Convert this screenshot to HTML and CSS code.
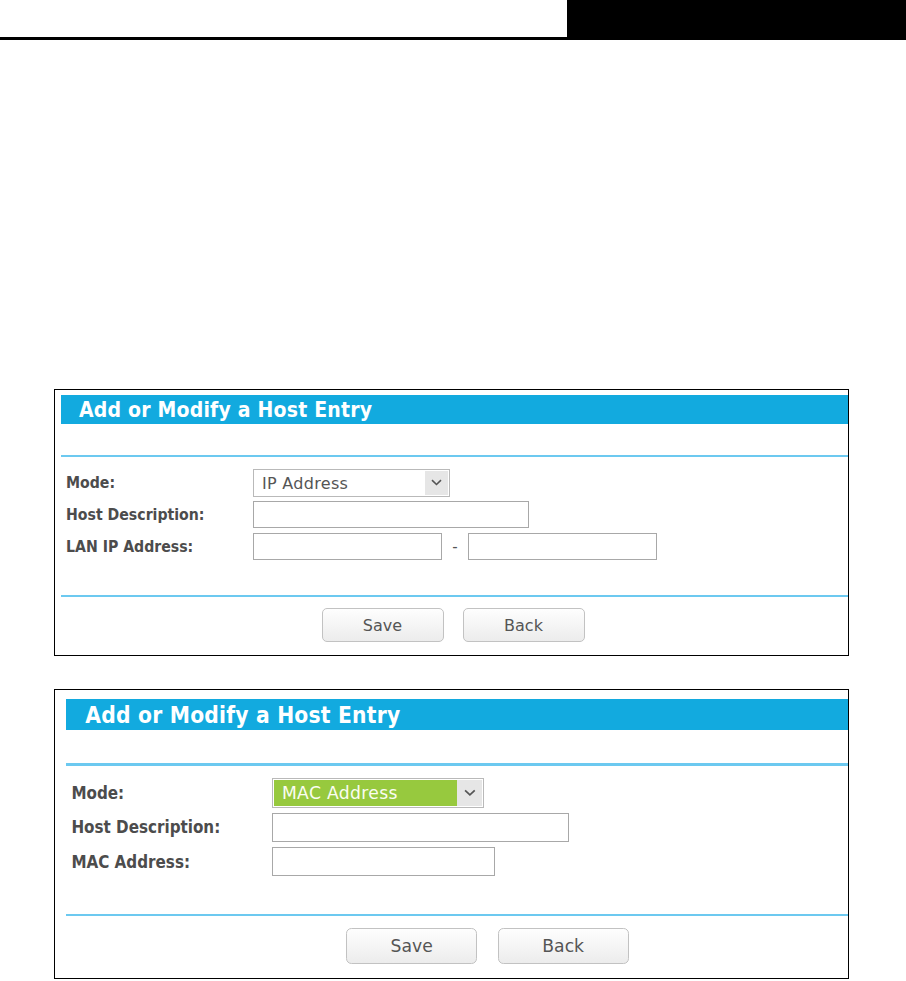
FILE: index.html
```html
<!DOCTYPE html>
<html lang="en">
<head>
    <meta charset="UTF-8">
    <meta name="viewport" content="width=device-width, initial-scale=1.0">
    <title>Add or Modify a Host Entry</title>
    <link rel="stylesheet" href="styles.css">
</head>
<body>
    <div class="doc-head">
        <div class="doc-tab"></div>
    </div>

    <div class="figures">
        <!-- figure 1: IP address mode -->
        <div class="figure">
            <div class="screen">
                <div class="title-bar">Add or Modify a Host Entry</div>
                <div class="divider divider-top"></div>
                <div class="form">
                    <div class="row">
                        <label class="label">Mode:</label>
                        <div class="select">
                            <span class="select-value">IP Address</span>
                            <span class="select-arrow">
                                <svg width="11" height="7" viewBox="0 0 11 7"><path d="M1 1.2 5.5 5.5 10 1.2" fill="none" stroke="#555" stroke-width="1.6"/></svg>
                            </span>
                        </div>
                    </div>
                    <div class="row">
                        <label class="label">Host Description:</label>
                        <input type="text" class="field field-desc">
                    </div>
                    <div class="row">
                        <label class="label">LAN IP Address:</label>
                        <input type="text" class="field field-ip">
                        <span class="dash">-</span>
                        <input type="text" class="field field-ip">
                    </div>
                </div>
                <div class="divider"></div>
                <div class="buttons">
                    <button class="btn">Save</button>
                    <button class="btn">Back</button>
                </div>
            </div>
        </div>

        <!-- figure 2: MAC address mode (screenshot taken a little larger) -->
        <div class="figure figure-zoomed">
            <div class="screen">
                <div class="title-bar">Add or Modify a Host Entry</div>
                <div class="divider divider-top"></div>
                <div class="form">
                    <div class="row">
                        <label class="label">Mode:</label>
                        <div class="select">
                            <span class="select-value selected">MAC Address</span>
                            <span class="select-arrow">
                                <svg width="11" height="7" viewBox="0 0 11 7"><path d="M1 1.2 5.5 5.5 10 1.2" fill="none" stroke="#555" stroke-width="1.6"/></svg>
                            </span>
                        </div>
                    </div>
                    <div class="row">
                        <label class="label">Host Description:</label>
                        <input type="text" class="field field-desc">
                    </div>
                    <div class="row">
                        <label class="label">MAC Address:</label>
                        <input type="text" class="field field-mac">
                    </div>
                </div>
                <div class="divider"></div>
                <div class="buttons">
                    <button class="btn">Save</button>
                    <button class="btn">Back</button>
                </div>
            </div>
        </div>
    </div>
</body>
</html>
```

FILE: styles.css
```css
body {
    margin: 0;
    background: #fff;
    font-family: 'DejaVu Sans', sans-serif;
    color: #4c4c4c;
}
.doc-head {
    height: 37px;
    border-bottom: 3px solid #000;
    display: flex;
    justify-content: flex-end;
}
.doc-tab {
    width: 339px;
    background: #000;
}
.figures {
    padding: 349px 0 0 54px;
    display: flex;
    flex-direction: column;
    gap: 33px;
}
.figure {
    box-sizing: border-box;
    width: 795px;
    border: 1px solid #000;
    padding: 5px 0 0 6px;
    overflow: hidden;
}
.figure-zoomed {
    padding: 9px 0 0 11px;
}
.screen {
    width: 788px;
}
.figure-zoomed .screen {
    zoom: 1.075;
}
.title-bar {
    height: 29px;
    line-height: 30px;
    background: #12aadf;
    color: #fff;
    font-family: 'DejaVu Sans Condensed', 'DejaVu Sans', sans-serif;
    font-weight: bold;
    font-size: 21px;
    letter-spacing: 0.2px;
    padding-left: 18px;
}
.divider {
    height: 2px;
    background: #6cc9f0;
}
.divider-top {
    margin-top: 31px;
}
.form {
    padding: 12px 0 35px 5px;
    display: flex;
    flex-direction: column;
    gap: 5px;
}
.row {
    display: flex;
    align-items: center;
    height: 27px;
}
.label {
    width: 187px;
    font-family: 'DejaVu Sans Condensed', 'DejaVu Sans', sans-serif;
    font-weight: bold;
    font-size: 15.7px;
    color: #4c4c4c;
}
.select {
    box-sizing: border-box;
    width: 197px;
    height: 28px;
    border: 1px solid #b9b9b9;
    padding: 1px;
    display: flex;
}
.select-value {
    flex: 1;
    padding-left: 7px;
    line-height: 25px;
    font-size: 16px;
    letter-spacing: 0.3px;
    color: #555;
}
.select-value.selected {
    background: #97c93e;
    color: #fbfdf2;
}
.select-arrow {
    width: 23px;
    background: #e6e6e6;
    display: flex;
    align-items: center;
    justify-content: center;
}
.field {
    box-sizing: border-box;
    height: 27px;
    margin: 0;
    border: 1px solid #a8a8a8;
    background: #fff;
    padding: 0 6px;
}
.field-desc {
    width: 276px;
}
.field-ip {
    width: 189px;
}
.field-mac {
    width: 207px;
}
.dash {
    width: 26px;
    text-align: center;
    font-size: 15px;
    color: #555;
}
.buttons {
    display: flex;
    justify-content: center;
    gap: 19px;
    padding: 11px 4px 13px 0;
}
.btn {
    width: 122px;
    height: 34px;
    border: 1px solid #c2c2c2;
    border-radius: 5px;
    background: linear-gradient(#fefefe, #ececec);
    font-family: 'DejaVu Sans', sans-serif;
    font-size: 16px;
    color: #555;
}
```
